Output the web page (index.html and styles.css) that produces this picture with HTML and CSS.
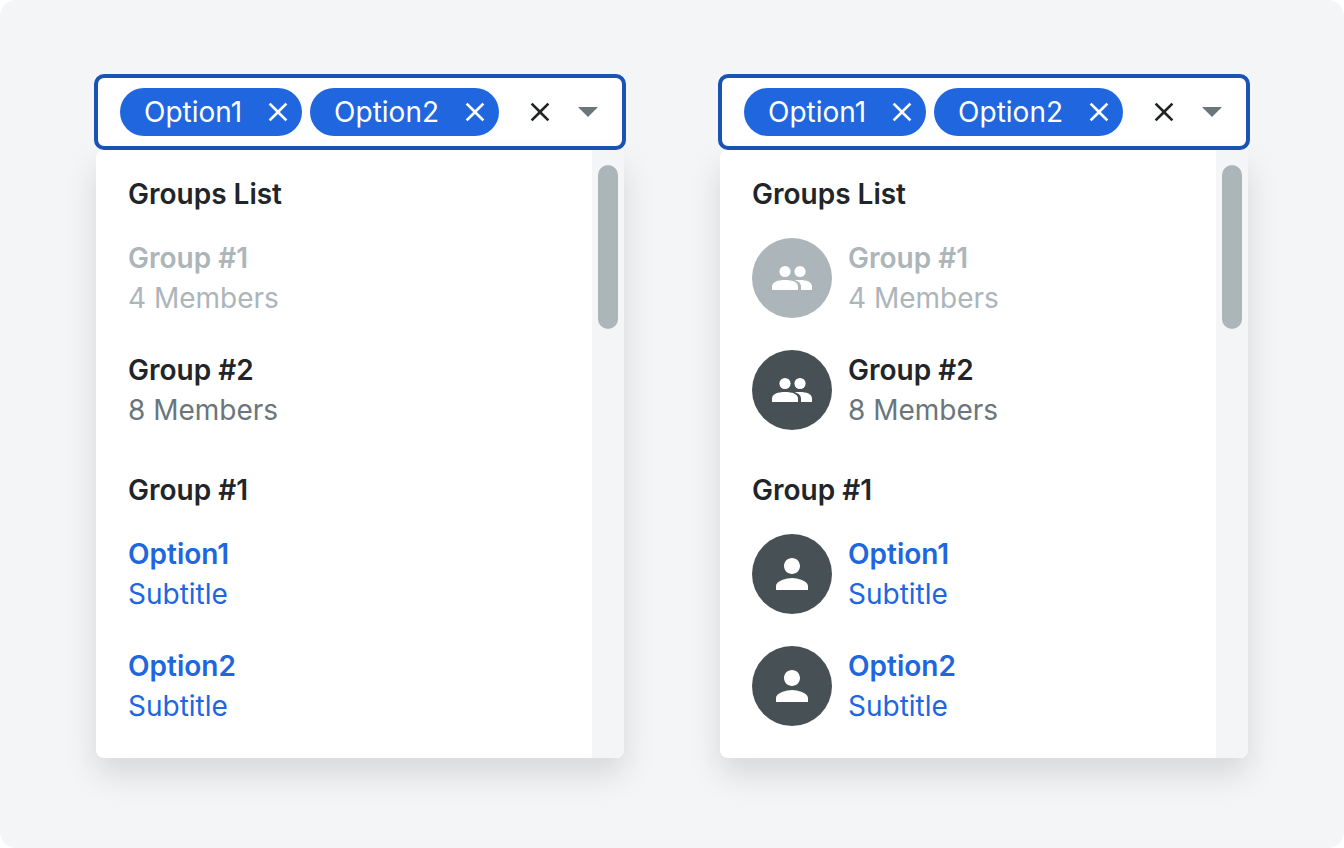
FILE: index.html
```html
<!DOCTYPE html>
<html lang="en">
<head>
<meta charset="utf-8">
<title>Multi select with groups</title>
<link rel="stylesheet" href="styles.css">
</head>
<body>

<!-- shared icons -->
<svg class="icon-defs" aria-hidden="true">
  <symbol id="icon-close" viewBox="0 0 24 24">
    <path d="M19 6.41L17.59 5 12 10.59 6.41 5 5 6.41 10.59 12 5 17.59 6.41 19 12 13.41 17.59 19 19 17.59 13.41 12z"/>
  </symbol>
  <symbol id="icon-caret" viewBox="0 0 24 24">
    <path d="M7 9.5l5 5 5-5z"/>
  </symbol>
  <symbol id="icon-group" viewBox="0 0 40 40">
    <circle cx="13" cy="13.500" r="5.600"/>
    <circle cx="28" cy="13.500" r="5.600"/>
    <path d="M0 32v-3.500C0 24 6 22 13 22s13 2 13 6.500V32z"/>
    <path d="M22.500 22.200C24.300 22.050 26.200 22 28 22c6.500 0 12 2 12 6.500V32H29v-3.500c0-3-2-5.200-6.500-6.300z"/>
  </symbol>
  <symbol id="icon-person" viewBox="0 0 24 24">
    <path d="M12 12c2.210 0 4-1.790 4-4s-1.790-4-4-4-4 1.790-4 4 1.790 4 4 4zm0 2c-2.670 0-8 1.340-8 4v2h16v-2c0-2.660-5.330-4-8-4z"/>
  </symbol>
</svg>

<main class="board">

  <!-- text only -->
  <section class="select">
    <div class="control">
      <div class="chips">
        <span class="chip">Option1 <button class="chip-remove" type="button" aria-label="Remove Option1"><svg class="icon"><use href="#icon-close"/></svg></button></span>
        <span class="chip">Option2 <button class="chip-remove" type="button" aria-label="Remove Option2"><svg class="icon"><use href="#icon-close"/></svg></button></span>
      </div>
      <button class="control-btn" type="button" aria-label="Clear all"><svg class="icon"><use href="#icon-close"/></svg></button>
      <button class="control-btn caret" type="button" aria-label="Toggle list"><svg class="icon-caret"><use href="#icon-caret"/></svg></button>
    </div>

    <div class="menu">
      <div class="menu-list">
        <h2 class="menu-heading">Groups List</h2>
        <button class="item" type="button" disabled>
          <span class="item-text"><span class="item-title">Group #1</span><span class="item-sub">4 Members</span></span>
        </button>
        <button class="item" type="button">
          <span class="item-text"><span class="item-title">Group #2</span><span class="item-sub">8 Members</span></span>
        </button>
        <h2 class="menu-heading">Group #1</h2>
        <button class="item selected" type="button">
          <span class="item-text"><span class="item-title">Option1</span><span class="item-sub">Subtitle</span></span>
        </button>
        <button class="item selected" type="button">
          <span class="item-text"><span class="item-title">Option2</span><span class="item-sub">Subtitle</span></span>
        </button>
      </div>
      <div class="scrollbar"><div class="scrollbar-thumb"></div></div>
    </div>
  </section>

  <!-- with avatars -->
  <section class="select">
    <div class="control">
      <div class="chips">
        <span class="chip">Option1 <button class="chip-remove" type="button" aria-label="Remove Option1"><svg class="icon"><use href="#icon-close"/></svg></button></span>
        <span class="chip">Option2 <button class="chip-remove" type="button" aria-label="Remove Option2"><svg class="icon"><use href="#icon-close"/></svg></button></span>
      </div>
      <button class="control-btn" type="button" aria-label="Clear all"><svg class="icon"><use href="#icon-close"/></svg></button>
      <button class="control-btn caret" type="button" aria-label="Toggle list"><svg class="icon-caret"><use href="#icon-caret"/></svg></button>
    </div>

    <div class="menu">
      <div class="menu-list">
        <h2 class="menu-heading">Groups List</h2>
        <button class="item" type="button" disabled>
          <span class="avatar"><svg class="icon-avatar"><use href="#icon-group"/></svg></span>
          <span class="item-text"><span class="item-title">Group #1</span><span class="item-sub">4 Members</span></span>
        </button>
        <button class="item" type="button">
          <span class="avatar"><svg class="icon-avatar"><use href="#icon-group"/></svg></span>
          <span class="item-text"><span class="item-title">Group #2</span><span class="item-sub">8 Members</span></span>
        </button>
        <h2 class="menu-heading">Group #1</h2>
        <button class="item selected" type="button">
          <span class="avatar"><svg class="icon-person"><use href="#icon-person"/></svg></span>
          <span class="item-text"><span class="item-title">Option1</span><span class="item-sub">Subtitle</span></span>
        </button>
        <button class="item selected" type="button">
          <span class="avatar"><svg class="icon-person"><use href="#icon-person"/></svg></span>
          <span class="item-text"><span class="item-title">Option2</span><span class="item-sub">Subtitle</span></span>
        </button>
      </div>
      <div class="scrollbar"><div class="scrollbar-thumb"></div></div>
    </div>
  </section>

</main>

</body>
</html>
```

FILE: styles.css
```css
* {
  box-sizing: border-box;
}
body {
  margin: 0;
  background: #fff;
  color: #212529;
  font-family: Inter, "Liberation Sans", sans-serif;
  font-size: 28px;
  line-height: 40px;
}
button {
  font: inherit;
  color: inherit;
  background: none;
  border: none;
  padding: 0;
  cursor: pointer;
}
svg {
  display: block;
  fill: currentColor;
}
.icon-defs {
  display: none;
}

.board {
  display: grid;
  grid-template-columns: 1fr 1fr;
  gap: 96px;
  align-items: start;
  min-height: 100vh;
  padding: 74px 96px;
  background: #f3f5f7;
  border-radius: 16px;
}

/* Control */
.control {
  display: flex;
  align-items: center;
  margin: 0 -2px;
  padding: 10px 10px 10px 22px;
  background: #fff;
  border: 4px solid #1a53b5;
  border-radius: 10px;
}
.chips {
  display: flex;
  flex: 1;
  gap: 8px;
}
.chip {
  display: flex;
  align-items: center;
  gap: 20px;
  height: 48px;
  padding: 0 8px 0 24px;
  background: #2066df;
  color: #fff;
  border-radius: 24px;
}
.icon {
  width: 32px;
  height: 32px;
}
.icon-caret {
  width: 48px;
  height: 48px;
}
.control-btn {
  display: flex;
  align-items: center;
  justify-content: center;
  width: 48px;
  height: 48px;
}
.caret {
  color: #6a767c;
}

/* Dropdown */
.menu {
  display: flex;
  overflow: hidden;
  background: #fff;
  border-radius: 8px;
  box-shadow: 0 16px 32px rgba(0, 0, 0, 0.12);
}
.menu-list {
  flex: 1;
  padding-bottom: 16px;
}
.menu-heading {
  margin: 0;
  padding: 24px 32px 8px;
  font-size: 28px;
  font-weight: 600;
}
.item {
  display: flex;
  align-items: center;
  gap: 16px;
  width: 100%;
  padding: 16px 32px;
  text-align: left;
}
.item-text {
  display: flex;
  flex-direction: column;
}
.item-title {
  font-weight: 600;
}
.item-sub {
  color: #6a767c;
}
.item:disabled,
.item:disabled .item-sub {
  color: #acb5ba;
}
.selected,
.selected .item-sub {
  color: #2066df;
}

.avatar {
  display: flex;
  align-items: center;
  justify-content: center;
  width: 80px;
  height: 80px;
  background: #475055;
  color: #fff;
  border-radius: 50%;
}
.item:disabled .avatar {
  background: #acb5ba;
}
.icon-avatar {
  width: 40px;
  height: 40px;
}
.icon-person {
  width: 48px;
  height: 48px;
}

.scrollbar {
  width: 32px;
  padding: 15px 6px;
  background: #f3f5f7;
}
.scrollbar-thumb {
  height: 164px;
  background: #acb5ba;
  border-radius: 10px;
}
```
